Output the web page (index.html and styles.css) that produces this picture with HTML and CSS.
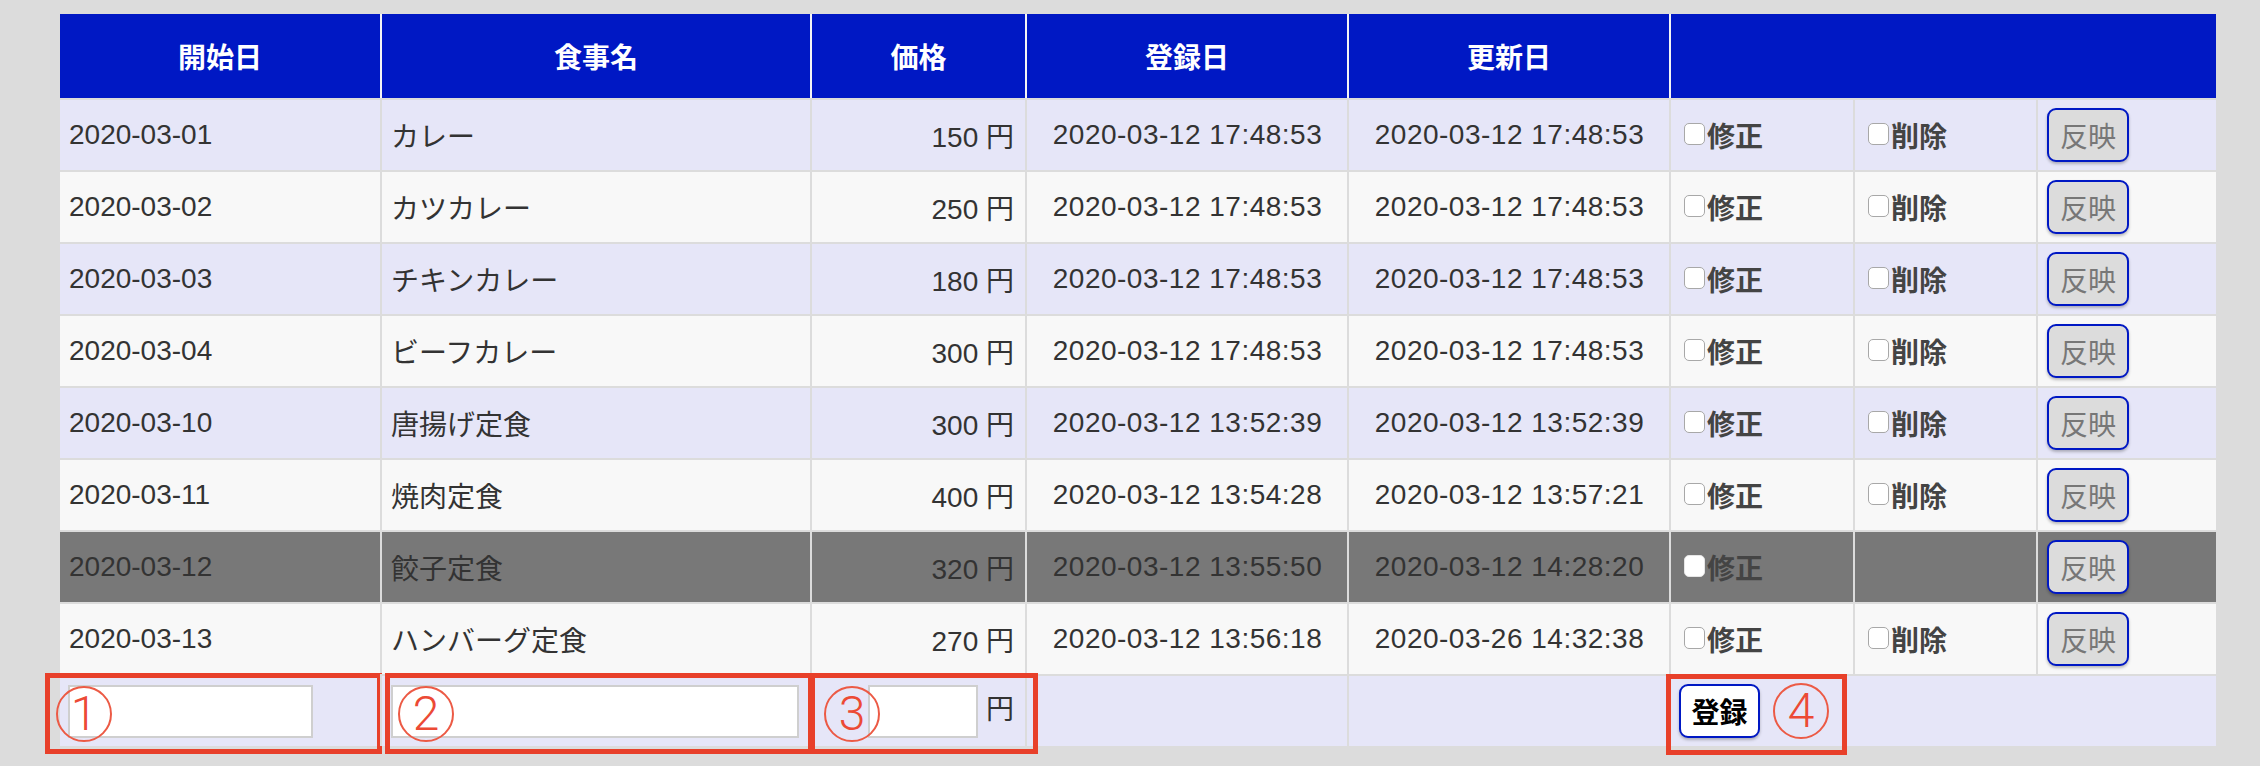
FILE: index.html
```html
<!DOCTYPE html>
<html lang="ja">
<head>
<meta charset="utf-8">
<title>メニュー管理</title>
<link rel="stylesheet" href="styles.css">
</head>
<body>
<div class="page">
<table class="menu">
  <colgroup>
    <col class="c-start">
    <col class="c-name">
    <col class="c-price">
    <col class="c-date">
    <col class="c-date">
    <col class="c-edit">
    <col class="c-del">
    <col class="c-apply">
  </colgroup>
  <thead>
    <tr>
      <th>開始日</th>
      <th>食事名</th>
      <th>価格</th>
      <th>登録日</th>
      <th>更新日</th>
      <th colspan="3"></th>
    </tr>
  </thead>
  <tbody>
    <tr class="odd">
      <td>2020-03-01</td><td>カレー</td><td class="price">150 円</td>
      <td class="center">2020-03-12 17:48:53</td><td class="center">2020-03-12 17:48:53</td>
      <td><label class="chk"><input type="checkbox">修正</label></td>
      <td><label class="chk"><input type="checkbox">削除</label></td>
      <td><button class="apply">反映</button></td>
    </tr>
    <tr class="even">
      <td>2020-03-02</td><td>カツカレー</td><td class="price">250 円</td>
      <td class="center">2020-03-12 17:48:53</td><td class="center">2020-03-12 17:48:53</td>
      <td><label class="chk"><input type="checkbox">修正</label></td>
      <td><label class="chk"><input type="checkbox">削除</label></td>
      <td><button class="apply">反映</button></td>
    </tr>
    <tr class="odd">
      <td>2020-03-03</td><td>チキンカレー</td><td class="price">180 円</td>
      <td class="center">2020-03-12 17:48:53</td><td class="center">2020-03-12 17:48:53</td>
      <td><label class="chk"><input type="checkbox">修正</label></td>
      <td><label class="chk"><input type="checkbox">削除</label></td>
      <td><button class="apply">反映</button></td>
    </tr>
    <tr class="even">
      <td>2020-03-04</td><td>ビーフカレー</td><td class="price">300 円</td>
      <td class="center">2020-03-12 17:48:53</td><td class="center">2020-03-12 17:48:53</td>
      <td><label class="chk"><input type="checkbox">修正</label></td>
      <td><label class="chk"><input type="checkbox">削除</label></td>
      <td><button class="apply">反映</button></td>
    </tr>
    <tr class="odd">
      <td>2020-03-10</td><td>唐揚げ定食</td><td class="price">300 円</td>
      <td class="center">2020-03-12 13:52:39</td><td class="center">2020-03-12 13:52:39</td>
      <td><label class="chk"><input type="checkbox">修正</label></td>
      <td><label class="chk"><input type="checkbox">削除</label></td>
      <td><button class="apply">反映</button></td>
    </tr>
    <tr class="even">
      <td>2020-03-11</td><td>焼肉定食</td><td class="price">400 円</td>
      <td class="center">2020-03-12 13:54:28</td><td class="center">2020-03-12 13:57:21</td>
      <td><label class="chk"><input type="checkbox">修正</label></td>
      <td><label class="chk"><input type="checkbox">削除</label></td>
      <td><button class="apply">反映</button></td>
    </tr>
    <tr class="current">
      <td>2020-03-12</td><td>餃子定食</td><td class="price">320 円</td>
      <td class="center">2020-03-12 13:55:50</td><td class="center">2020-03-12 14:28:20</td>
      <td><label class="chk"><input type="checkbox">修正</label></td>
      <td></td>
      <td><button class="apply">反映</button></td>
    </tr>
    <tr class="even">
      <td>2020-03-13</td><td>ハンバーグ定食</td><td class="price">270 円</td>
      <td class="center">2020-03-12 13:56:18</td><td class="center">2020-03-26 14:32:38</td>
      <td><label class="chk"><input type="checkbox">修正</label></td>
      <td><label class="chk"><input type="checkbox">削除</label></td>
      <td><button class="apply">反映</button></td>
    </tr>
    <tr class="odd new-row">
      <td class="anchor">
        <input type="text" class="field f-start">
        <span class="mark box b1"></span>
        <span class="mark circle c1">1</span>
      </td>
      <td class="anchor">
        <input type="text" class="field f-name">
        <span class="mark box b2"></span>
        <span class="mark circle c2">2</span>
      </td>
      <td class="anchor price">
        <input type="text" class="field f-price"> 円
        <span class="mark box b3"></span>
        <span class="mark circle c3">3</span>
      </td>
      <td></td>
      <td></td>
      <td class="anchor" colspan="3">
        <button class="register">登録</button>
        <span class="mark box b4"></span>
        <span class="mark circle c4">4</span>
      </td>
    </tr>
  </tbody>
</table>
</div>
</body>
</html>
```
FILE: styles.css
```css
html, body {
  margin: 0;
  background: #dcdcdc;
}

body {
  font-family: "Liberation Sans", "Noto Sans CJK JP", sans-serif;
}

.page {
  padding: 14px 0 20px 60px;
}

.menu {
  border-collapse: separate;
  border-spacing: 0;
  table-layout: fixed;
  width: 2156px;
  font-size: 28px;
  color: #333;
}

.c-start { width: 320px; }
.c-name { width: 430px; }
.c-price { width: 215px; }
.c-date { width: 322px; }
.c-edit { width: 184px; }
.c-del { width: 183px; }
.c-apply { width: 180px; }

.menu th {
  background: #0018c4;
  color: #fff;
  font-weight: bold;
  height: 84px;
  padding: 0;
  box-sizing: border-box;
  text-align: center;
  font-family: "Noto Sans CJK JP", sans-serif;
}

.menu th + th {
  border-left: 2px solid #f4f4f4;
}

.menu td {
  height: 72px;
  box-sizing: border-box;
  border-top: 2px solid #dcdcdc;
  padding: 0 8px 0 9px;
  white-space: nowrap;
  vertical-align: middle;
}

.menu td + td {
  border-left: 2px solid #dcdcdc;
}

.odd td { background: #e6e6f8; }
.even td { background: #f8f8f8; }
.current td { background: #787878; }

.price {
  text-align: right;
  padding-right: 11px !important;
}

.center {
  text-align: center;
  letter-spacing: 0.5px;
}

.chk {
  font-weight: bold;
  color: #444;
  font-family: "Noto Sans CJK JP", sans-serif;
}

.chk input {
  appearance: none;
  -webkit-appearance: none;
  width: 21px;
  height: 22px;
  margin: 0 2px 0 4px;
  border: 1px solid #a8a8a8;
  border-radius: 5px;
  background: #fff;
  vertical-align: 2px;
  box-sizing: border-box;
}

.current .chk input {
  border-color: #e6e6e6;
}

.apply,
.register {
  width: 82px;
  height: 54px;
  padding: 0;
  border: 2px solid #0018c4;
  border-radius: 9px;
  box-shadow: 0 2px 3px rgba(0, 0, 0, 0.25);
  font-size: 28px;
  font-family: "Noto Sans CJK JP", sans-serif;
  vertical-align: middle;
}

.apply {
  background: #dcdcdc;
  color: #777;
}

.register {
  background: #fff;
  color: #000;
  font-weight: bold;
  width: 81px;
  margin-left: -1px;
}

.field {
  height: 53px;
  box-sizing: border-box;
  border: 2px solid #cfcfcf;
  background: #fff;
  padding: 0 4px;
  font-size: 28px;
  vertical-align: middle;
  margin: 0;
}

.f-start { width: 245px; margin-left: -1px; }
.f-name { width: 408px; }
.f-price { width: 110px; }

.anchor {
  position: relative;
}

.mark {
  position: absolute;
  pointer-events: none;
}

.box {
  border: 5px solid #e8402a;
}

.b1 { left: -15px; right: -2px; top: -3px; bottom: -8px; }
.b2 { left: 3px; right: -3px; top: -3px; bottom: -8px; }
.b3 { left: -2px; right: -13px; top: -3px; bottom: -8px; }
.b4 { left: -5px; width: 171px; top: -2px; bottom: -9px; }

.circle {
  top: 10px;
  width: 56px;
  height: 56px;
  box-sizing: border-box;
  border: 2px solid #ec5a45;
  border-radius: 50%;
  color: #ec4a35;
  font-family: "Roboto", "Liberation Sans", sans-serif;
  font-weight: 300;
  font-size: 48px;
  line-height: 52px;
  text-align: center;
}

.c1 { left: -4px; }
.c2 { left: 16px; }
.c3 { left: 12px; }
.c4 { left: 102px; top: 7px; }
```
